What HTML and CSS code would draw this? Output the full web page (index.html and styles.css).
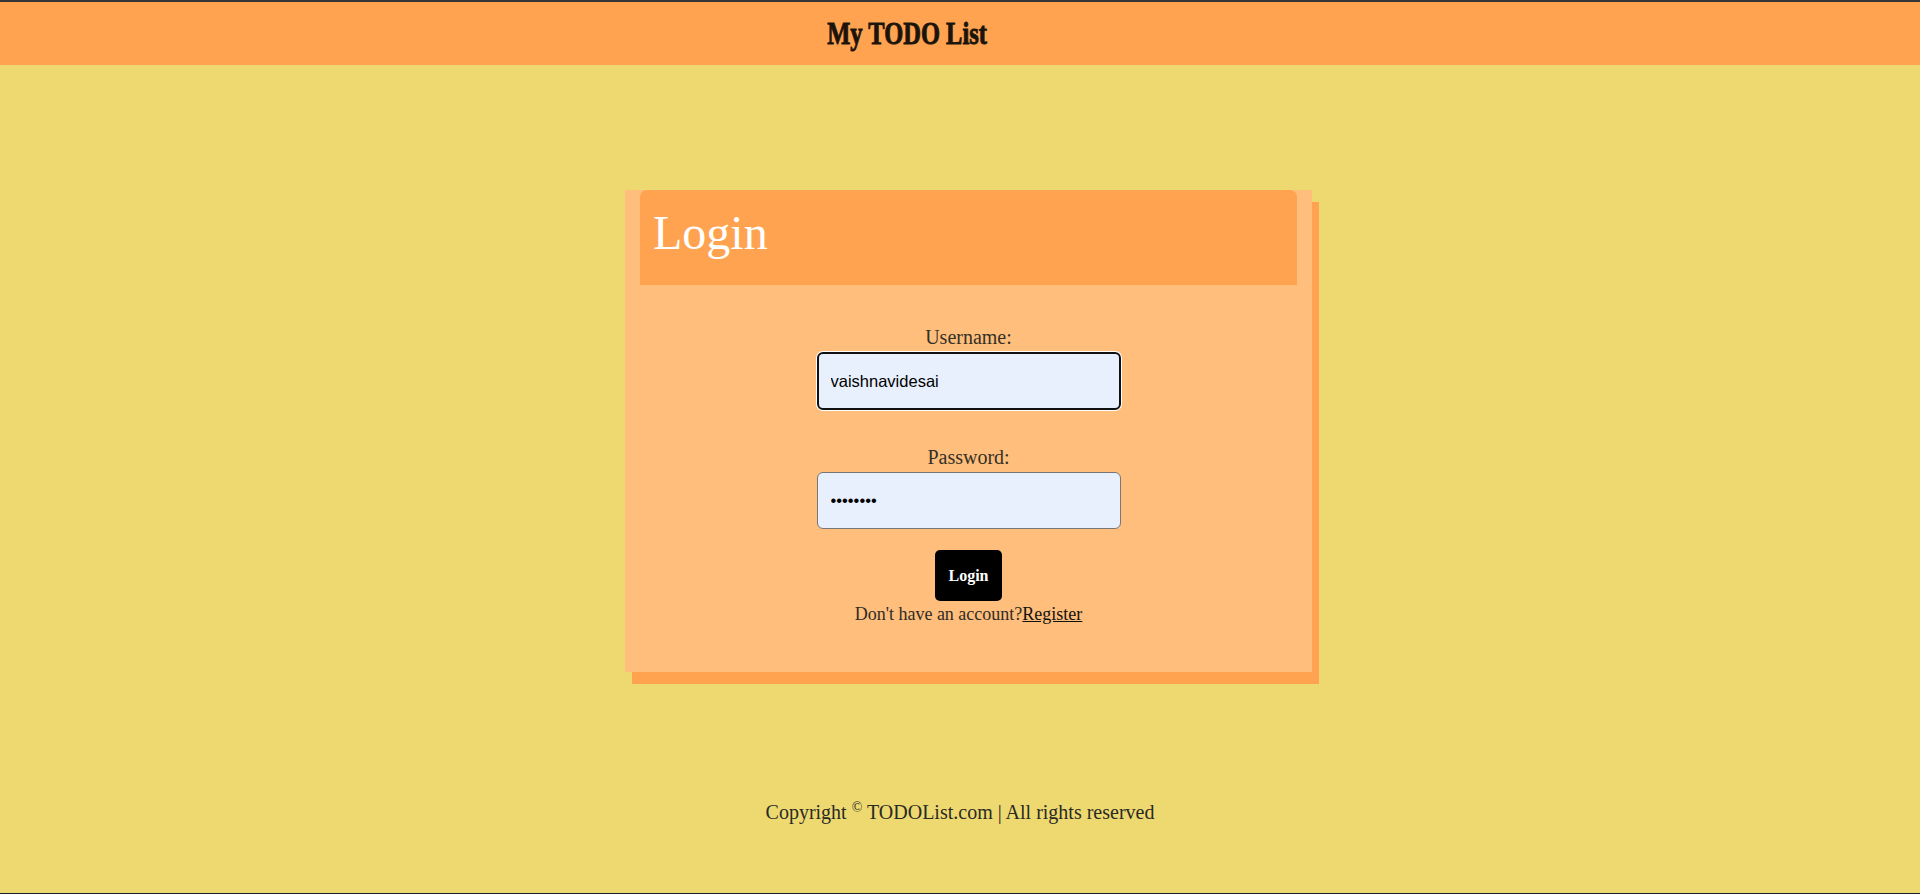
FILE: index.html
```html
<!DOCTYPE html>
<html lang="en">
<head>
<meta charset="utf-8">
<title>My TODO List - Login</title>
<link rel="stylesheet" href="styles.css">
</head>
<body>
<div class="page">
  <header class="topbar">
    <span class="brand">My TODO List</span>
  </header>
  <main class="main">
    <section class="card">
      <div class="card-head">
        <h1 class="card-title">Login</h1>
      </div>
      <form class="form">
        <label class="label" for="username">Username:</label>
        <input class="field field-focused" id="username" type="text" value="vaishnavidesai">
        <label class="label label-gap" for="password">Password:</label>
        <input class="field" id="password" type="password" value="12345678">
        <button class="btn" type="button">Login</button>
        <p class="hint">Don't have an account?<a class="link" href="#">Register</a></p>
      </form>
    </section>
  </main>
  <footer class="footer">Copyright <sup class="copy">&copy;</sup> TODOList.com | All rights reserved</footer>
</div>
</body>
</html>
```

FILE: styles.css
```css
* { box-sizing: border-box; }

html, body {
  margin: 0;
  padding: 0;
}

body {
  background: #EED971;
  font-family: "Liberation Serif", "Times New Roman", serif;
}

.page {
  height: 894px;
  border-top: 2px solid #363636;
  border-bottom: 1px solid #1e1e2a;
  display: flex;
  flex-direction: column;
}

.topbar {
  height: 63px;
  background: #FFA351;
  display: flex;
  align-items: center;
  justify-content: center;
  padding-right: 106px;
}

.brand {
  display: inline-block;
  font-family: "Liberation Serif", serif;
  font-weight: 700;
  font-size: 31px;
  line-height: 31px;
  color: #1b140c;
  transform: scaleX(0.79);
  -webkit-text-stroke: 0.9px #1b140c;
}

.main {
  padding-top: 125px;
}

.card {
  width: 687px;
  height: 482px;
  margin-left: calc(50% - 335px);
  background: #FFBE7B;
  box-shadow: 7px 12px 0 #FFA351;
}

.card-head {
  margin: 0 15px;
  height: 95px;
  background: #FFA351;
  border-radius: 7px 7px 0 0;
  padding: 19px 0 0 13px;
}

.card-title {
  margin: 0;
  font-size: 48px;
  line-height: 48px;
  font-weight: 400;
  color: #ffffff;
}

.form {
  display: flex;
  flex-direction: column;
  align-items: center;
  padding-top: 40px;
}

.label {
  font-size: 20px;
  line-height: 24px;
  color: #333027;
  margin-bottom: 3px;
}

.label-gap {
  margin-top: 35px;
}

.field {
  width: 304px;
  height: 57px;
  border: 1px solid #767676;
  border-radius: 6px;
  background: #E8F0FE;
  padding: 0 13px;
  font-family: "Liberation Sans", Arial, sans-serif;
  font-size: 16.5px;
  color: #000;
  outline: none;
}

.field-focused {
  height: 58px;
  border: 2px solid #101010;
  padding-left: 12px;
  box-shadow: 0 0 0 1px #ffffff;
}

.btn {
  margin-top: 21px;
  padding: 16px 13px;
  border: none;
  border-radius: 5px;
  background: #000;
  color: #fff;
  font-family: "Liberation Serif", serif;
  font-weight: 700;
  font-size: 16px;
  line-height: 19px;
}

.hint {
  margin: 2px 0 0;
  font-size: 18px;
  line-height: 22px;
  color: #2e2c26;
}

.link {
  color: #111;
  text-decoration: underline;
}

.footer {
  margin-top: 128px;
  text-align: center;
  font-size: 20px;
  line-height: 24px;
  color: #2a2a24;
}

.copy {
  font-size: 14px;
  vertical-align: 7px;
  line-height: 0;
}
```
